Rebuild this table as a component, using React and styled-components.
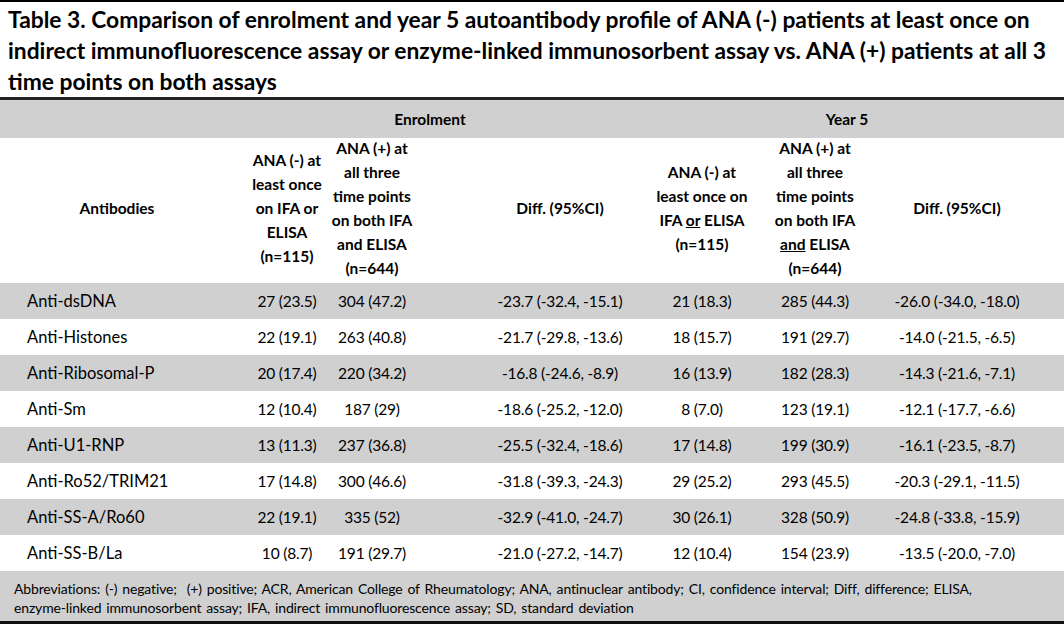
import React from "react";
import styled, { createGlobalStyle } from "styled-components";

const GlobalStyle = createGlobalStyle`
  body {
    margin: 0;
    background: #fff;
    font-family: Lato, "Open Sans", sans-serif;
    color: #000;
  }
`;

const COLS = "234px 106px 64px 60px 192px 92px 134px 150px 32px";
const PLACE = [1, 2, 3, 5, 6, 7, 8];

const Page = styled.div`
  width: 1064px;
  height: 626px;
  overflow: hidden;
`;

const Title = styled.h1`
  margin: 0;
  border-top: 2px solid #000;
  padding: 2px 8px 0;
  font-size: 22.8px;
  line-height: 31px;
  font-weight: 700;
`;

const TitleLine = styled.span`
  display: block;
  white-space: nowrap;
`;

const Table = styled.div`
  border-top: 3px solid #222;
  border-bottom: 3px solid #111;
`;

const Row = styled.div`
  display: grid;
  grid-template-columns: ${COLS};
  align-items: center;
  height: ${(p) => p.$h}px;
  background: ${(p) => (p.$shade ? "#d0d0d0" : "#fff")};
`;

const Group = styled.div`
  grid-column: ${(p) => p.$span};
  display: flex;
  justify-content: center;
  padding-right: ${(p) => p.$pr}px;
  font-weight: 700;
  font-size: 15.5px;
`;

const Head = styled.div`
  grid-column: ${(p) => p.$col};
  display: flex;
  justify-content: center;
  text-align: center;
  white-space: nowrap;
  font-weight: 700;
  font-size: 15.5px;
  line-height: 24px;
  margin-top: -6px;
`;

const Cell = styled.div`
  grid-column: ${(p) => p.$col};
  display: flex;
  justify-content: ${(p) => (p.$left ? "flex-start" : "center")};
  padding-left: ${(p) => (p.$left ? "27px" : "0")};
  white-space: nowrap;
  font-size: ${(p) => (p.$left ? "16.5px" : "15.5px")};
  letter-spacing: ${(p) => (p.$left ? "0" : "-0.2px")};
`;

const Note = styled.div`
  background: #d0d0d0;
  padding: 8px 14px 0;
  height: 50px;
  box-sizing: border-box;
  font-size: 14px;
  line-height: 19px;
  letter-spacing: -0.15px;
`;

const NoteLine = styled.span`
  display: block;
  white-space: nowrap;
  word-spacing: ${(p) => p.$ws || 0}px;
`;

const heads = [
  ["Antibodies"],
  ["ANA (-) at", "least once", "on IFA or", "ELISA", "(n=115)"],
  ["ANA (+) at", "all three", "time points", "on both IFA", "and ELISA", "(n=644)"],
  ["Diff. (95%CI)"],
  ["ANA (-) at", "least once on", <>IFA <u>or</u> ELISA</>, "(n=115)"],
  ["ANA (+) at", "all three", "time points", "on both IFA", <><u>and</u> ELISA</>, "(n=644)"],
  ["Diff. (95%CI)"],
];

const rows = [
  ["Anti-dsDNA", "27 (23.5)", "304 (47.2)", "-23.7 (-32.4, -15.1)", "21 (18.3)", "285 (44.3)", "-26.0 (-34.0, -18.0)"],
  ["Anti-Histones", "22 (19.1)", "263 (40.8)", "-21.7 (-29.8, -13.6)", "18 (15.7)", "191 (29.7)", "-14.0 (-21.5, -6.5)"],
  ["Anti-Ribosomal-P", "20 (17.4)", "220 (34.2)", "-16.8 (-24.6, -8.9)", "16 (13.9)", "182 (28.3)", "-14.3 (-21.6, -7.1)"],
  ["Anti-Sm", "12 (10.4)", "187 (29)", "-18.6 (-25.2, -12.0)", "8 (7.0)", "123 (19.1)", "-12.1 (-17.7, -6.6)"],
  ["Anti-U1-RNP", "13 (11.3)", "237 (36.8)", "-25.5 (-32.4, -18.6)", "17 (14.8)", "199 (30.9)", "-16.1 (-23.5, -8.7)"],
  ["Anti-Ro52/TRIM21", "17 (14.8)", "300 (46.6)", "-31.8 (-39.3, -24.3)", "29 (25.2)", "293 (45.5)", "-20.3 (-29.1, -11.5)"],
  ["Anti-SS-A/Ro60", "22 (19.1)", "335 (52)", "-32.9 (-41.0, -24.7)", "30 (26.1)", "328 (50.9)", "-24.8 (-33.8, -15.9)"],
  ["Anti-SS-B/La", "10 (8.7)", "191 (29.7)", "-21.0 (-27.2, -14.7)", "12 (10.4)", "154 (23.9)", "-13.5 (-20.0, -7.0)"],
];

export default function App() {
  return (
    <Page>
      <GlobalStyle />
      <Title>
        <TitleLine>
          Table 3. Comparison of enrolment and year 5 autoantibody profile of ANA (-) patients at least once on
        </TitleLine>
        <TitleLine>
          indirect immunofluorescence assay or enzyme-linked immunosorbent assay vs. ANA (+) patients at all 3
        </TitleLine>
        <TitleLine>time points on both assays</TitleLine>
      </Title>
      <Table>
        <Row $h={38} $shade>
          <Group $span="2 / 6" $pr={30}>Enrolment</Group>
          <Group $span="6 / 10" $pr={26}>Year 5</Group>
        </Row>
        <Row $h={145}>
          {heads.map((lines, i) => (
            <Head key={i} $col={PLACE[i]}>
              <div>
                {lines.map((l, j) => (
                  <div key={j}>{l}</div>
                ))}
              </div>
            </Head>
          ))}
        </Row>
        {rows.map((r, i) => (
          <Row key={r[0]} $h={36} $shade={i % 2 === 0}>
            {r.map((v, j) => (
              <Cell key={j} $col={PLACE[j]} $left={j === 0}>
                {v}
              </Cell>
            ))}
          </Row>
        ))}
        <Note>
          <NoteLine $ws={1.5}>
            Abbreviations: (-) negative;&nbsp; (+) positive; ACR, American College of Rheumatology; ANA, antinuclear
            antibody; CI, confidence interval; Diff, difference; ELISA,
          </NoteLine>
          <NoteLine $ws={1.5}>
            enzyme-linked immunosorbent assay; IFA, indirect immunofluorescence assay; SD, standard deviation
          </NoteLine>
        </Note>
      </Table>
    </Page>
  );
}
